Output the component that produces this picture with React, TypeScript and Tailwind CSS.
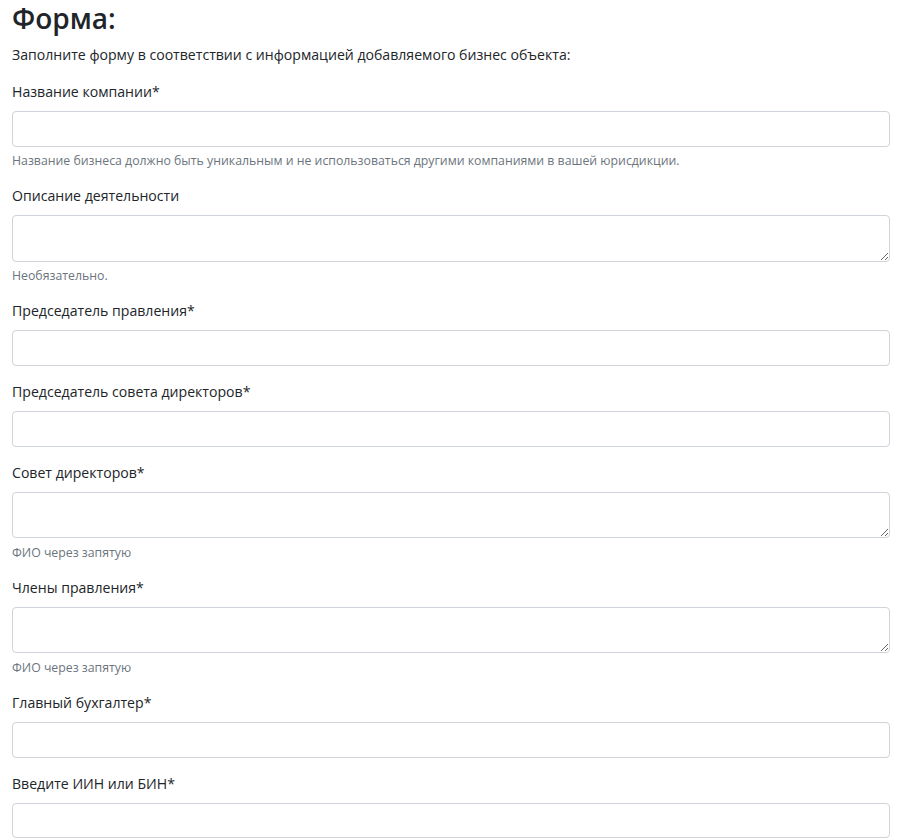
import React from "react";

type Field = {
  label: string;
  multiline?: boolean;
  help?: string;
};

const fields: Field[] = [
  {
    label: "Название компании*",
    help: "Название бизнеса должно быть уникальным и не использоваться другими компаниями в вашей юрисдикции.",
  },
  { label: "Описание деятельности", multiline: true, help: "Необязательно." },
  { label: "Председатель правления*" },
  { label: "Председатель совета директоров*" },
  { label: "Совет директоров*", multiline: true, help: "ФИО через запятую" },
  { label: "Члены правления*", multiline: true, help: "ФИО через запятую" },
  { label: "Главный бухгалтер*" },
  { label: "Введите ИИН или БИН*" },
];

const controlCls =
  "block w-full rounded-[4px] border border-[#ced4da] bg-white px-[11px] text-[14px] text-[#495057] outline-none focus:border-[#80bdff]";

const App: React.FC = () => {
  return (
    <div
      className="min-h-screen bg-white pl-[12px] pr-[15px] text-[14.1px] leading-[22.5px] text-[#212529]"
      style={{ fontFamily: '"Open Sans", "Noto Sans", sans-serif' }}
    >
      <h2 className="mb-[7.5px] text-[28px] font-semibold leading-[36px]">Форма:</h2>
      <p className="mb-[15px]">
        Заполните форму в соответствии с информацией добавляемого бизнес объекта:
      </p>

      <form>
        {fields.map((f, i) => (
          <div key={i} className="mb-[15px]">
            <label className="mb-[7.5px] inline-block">{f.label}</label>
            {f.multiline ? (
              <textarea className={`${controlCls} h-[46.5px] py-[5px]`} />
            ) : (
              <input type="text" className={`${controlCls} h-[35.75px]`} />
            )}
            {f.help && (
              <small className="mt-[4.5px] block text-[12.3px] leading-[19px] text-[#6c757d]">
                {f.help}
              </small>
            )}
          </div>
        ))}
      </form>
    </div>
  );
};

export default App;
